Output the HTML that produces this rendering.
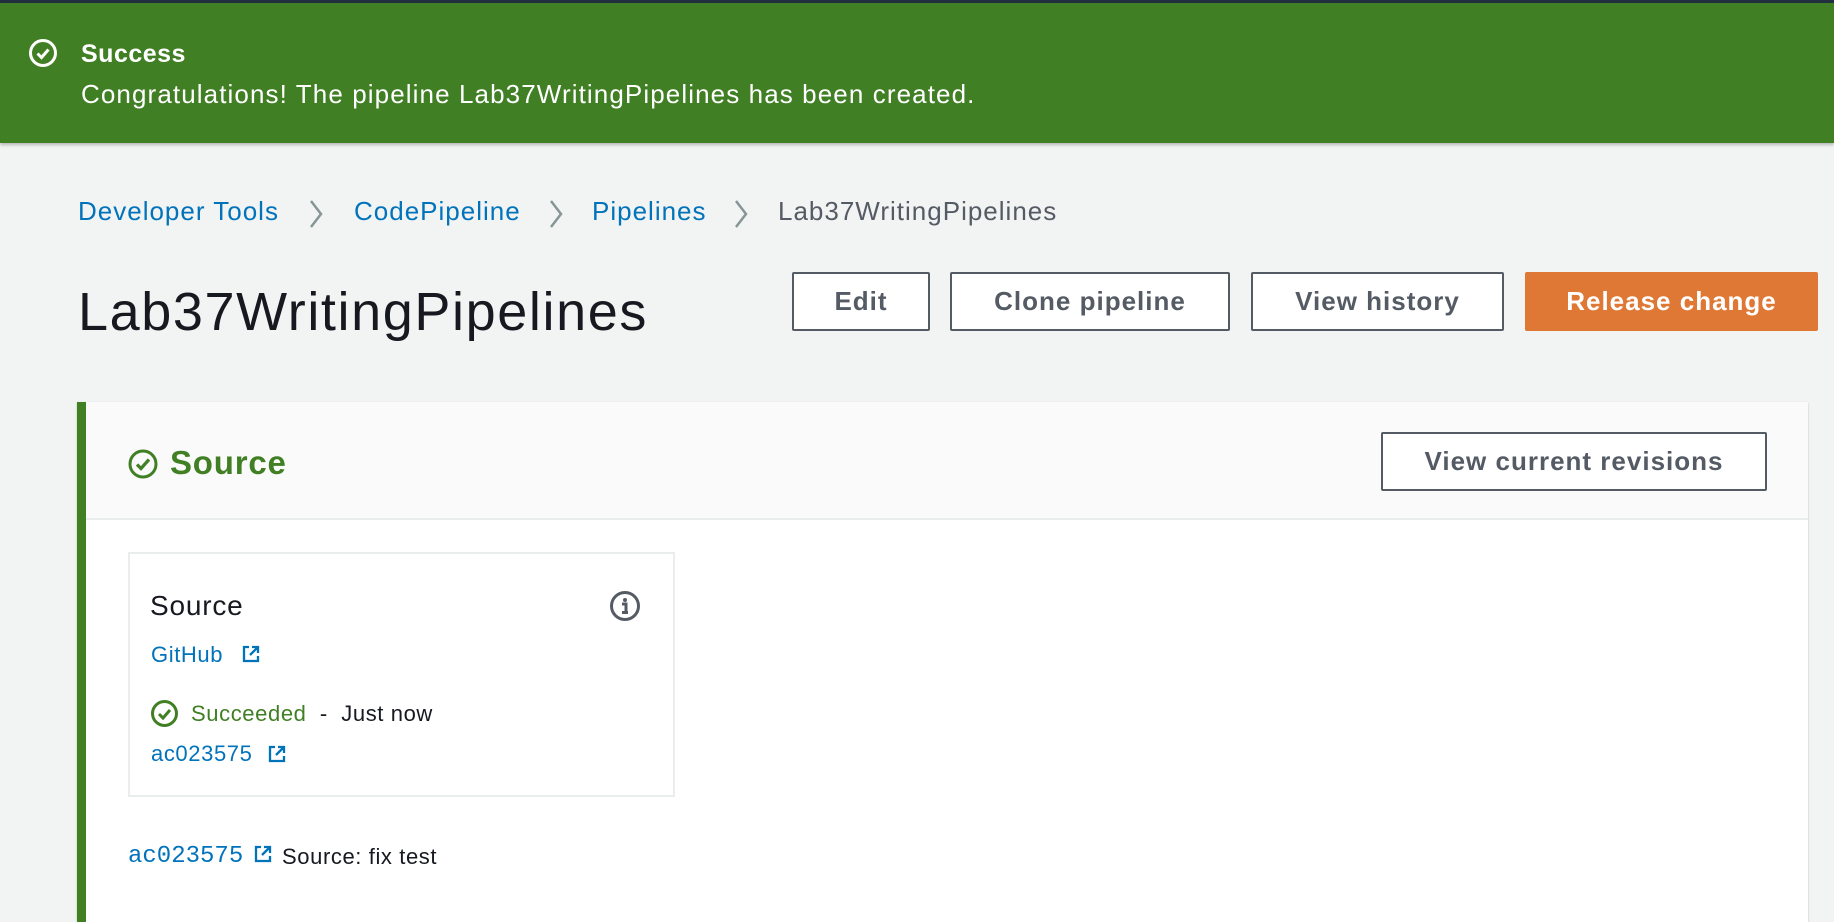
<!DOCTYPE html>
<html><head><meta charset="utf-8"><style>
*{margin:0;padding:0;box-sizing:border-box}
body{width:1834px;height:914px;overflow:hidden;background:#f2f3f3;font-family:"Liberation Sans",sans-serif;position:relative;color:#16191f}
.abs{position:absolute;white-space:nowrap}
#top{position:absolute;left:0;top:0;width:1834px;height:3px;background:#232f3e}
#banner{position:absolute;left:0;top:3px;width:1834px;height:140px;background:#417f24;box-shadow:0 2px 3px rgba(0,0,0,.25)}
.bc{font-size:26px;letter-spacing:1px;color:#0073bb;top:196px}
.sep{top:199px}
.btn{position:absolute;top:272px;height:59px;border:2px solid #545b64;border-radius:2px;background:#fff;color:#545b64;font-weight:bold;font-size:26px;letter-spacing:1px;display:flex;align-items:center;justify-content:center}
#panel{position:absolute;left:77px;top:402px;width:1731px;height:520px;background:#fff;border-left:9px solid #417f24;box-shadow:0 1px 2px rgba(0,0,0,.2)}
#ph{position:absolute;left:0;top:0;right:0;height:118px;background:#fafafa;border-bottom:2px solid #eaeded}
.link{color:#0073bb}
.t{font-size:22px;letter-spacing:.6px}
</style></head><body>
<div id="top"></div>
<div id="banner">
<svg class="abs" style="left:28px;top:35px" width="30" height="30" viewBox="0 0 30 30"><circle cx="15" cy="15" r="12.5" fill="none" stroke="#fff" stroke-width="3"/><path d="M9.5 15.5l4 4 7-8" fill="none" stroke="#fff" stroke-width="3"/></svg>
<div class="abs" style="left:81px;top:37px;color:#fff;font-weight:bold;font-size:25px;letter-spacing:.5px">Success</div>
<div class="abs" style="left:81px;top:76px;color:#fff;font-size:26px;letter-spacing:1.1px">Congratulations! The pipeline Lab37WritingPipelines has been created.</div>
</div>
<div class="abs bc" style="left:78px">Developer Tools</div>
<svg class="abs sep" style="left:308px" width="16" height="30" viewBox="0 0 16 30"><path d="M3 2l10 13-10 13" fill="none" stroke="#879596" stroke-width="2.5"/></svg>
<div class="abs bc" style="left:354px">CodePipeline</div>
<svg class="abs sep" style="left:548px" width="16" height="30" viewBox="0 0 16 30"><path d="M3 2l10 13-10 13" fill="none" stroke="#879596" stroke-width="2.5"/></svg>
<div class="abs bc" style="left:592px">Pipelines</div>
<svg class="abs sep" style="left:733px" width="16" height="30" viewBox="0 0 16 30"><path d="M3 2l10 13-10 13" fill="none" stroke="#879596" stroke-width="2.5"/></svg>
<div class="abs bc" style="left:778px;color:#545b64">Lab37WritingPipelines</div>
<div class="abs" style="left:78px;top:281px;font-size:54px;letter-spacing:1.6px;color:#16191f">Lab37WritingPipelines</div>
<div class="btn" style="left:792px;width:138px">Edit</div>
<div class="btn" style="left:950px;width:280px">Clone pipeline</div>
<div class="btn" style="left:1251px;width:253px">View history</div>
<div class="btn" style="left:1525px;width:293px;background:#df7834;border-color:#df7834;color:#fff">Release change</div>
<div id="panel">
<div id="ph"></div>
<svg class="abs" style="left:41px;top:46px" width="32" height="32" viewBox="0 0 32 32"><circle cx="16" cy="16" r="13" fill="none" stroke="#417f24" stroke-width="3"/><path d="M10 16.5l4 4 8-9" fill="none" stroke="#417f24" stroke-width="3.2"/></svg>
<div class="abs" style="left:84px;top:42px;font-size:33px;letter-spacing:.8px;font-weight:bold;color:#417f24">Source</div>
<div class="btn" style="left:1295px;top:30px;width:386px">View current revisions</div>
<div class="abs" style="left:42px;top:150px;width:547px;height:245px;border:2px solid #eaeded"></div>
<div class="abs" style="left:64px;top:188px;font-size:28px;letter-spacing:.8px">Source</div>
<svg class="abs" style="left:523px;top:188px" width="32" height="32" viewBox="0 0 32 32"><circle cx="16" cy="16" r="13.5" fill="none" stroke="#545b64" stroke-width="3"/><circle cx="16" cy="10" r="2" fill="#545b64"/><path d="M13 14h4v8M13 22.5h6" stroke="#545b64" stroke-width="3" fill="none"/></svg>
<div class="abs link t" style="left:65px;top:240px">GitHub</div>
<svg class="abs" style="left:156px;top:243px" width="18" height="18" viewBox="0 0 18 18"><path d="M7 2H2v14h14v-5M10 2h6v6M16 2l-8 8" fill="none" stroke="#0073bb" stroke-width="2.3"/></svg>
<svg class="abs" style="left:64px;top:297px" width="29" height="29" viewBox="0 0 29 29"><circle cx="14.5" cy="14.5" r="12" fill="none" stroke="#417f24" stroke-width="3"/><path d="M9 15l4 4 7-8" fill="none" stroke="#417f24" stroke-width="3"/></svg>
<div class="abs t" style="left:105px;top:299px"><span style="color:#417f24">Succeeded</span>&nbsp; -&nbsp; Just now</div>
<div class="abs link t" style="left:65px;top:339px">ac023575</div>
<svg class="abs" style="left:182px;top:343px" width="18" height="18" viewBox="0 0 18 18"><path d="M7 2H2v14h14v-5M10 2h6v6M16 2l-8 8" fill="none" stroke="#0073bb" stroke-width="2.3"/></svg>
<div class="abs link" style="left:42px;top:441px;font-size:24px;font-family:'Liberation Mono',monospace">ac023575</div>
<svg class="abs" style="left:168px;top:443px" width="18" height="18" viewBox="0 0 18 18"><path d="M7 2H2v14h14v-5M10 2h6v6M16 2l-8 8" fill="none" stroke="#0073bb" stroke-width="2.3"/></svg>
<div class="abs t" style="left:196px;top:442px">Source: fix test</div>
</div>
</body></html>
